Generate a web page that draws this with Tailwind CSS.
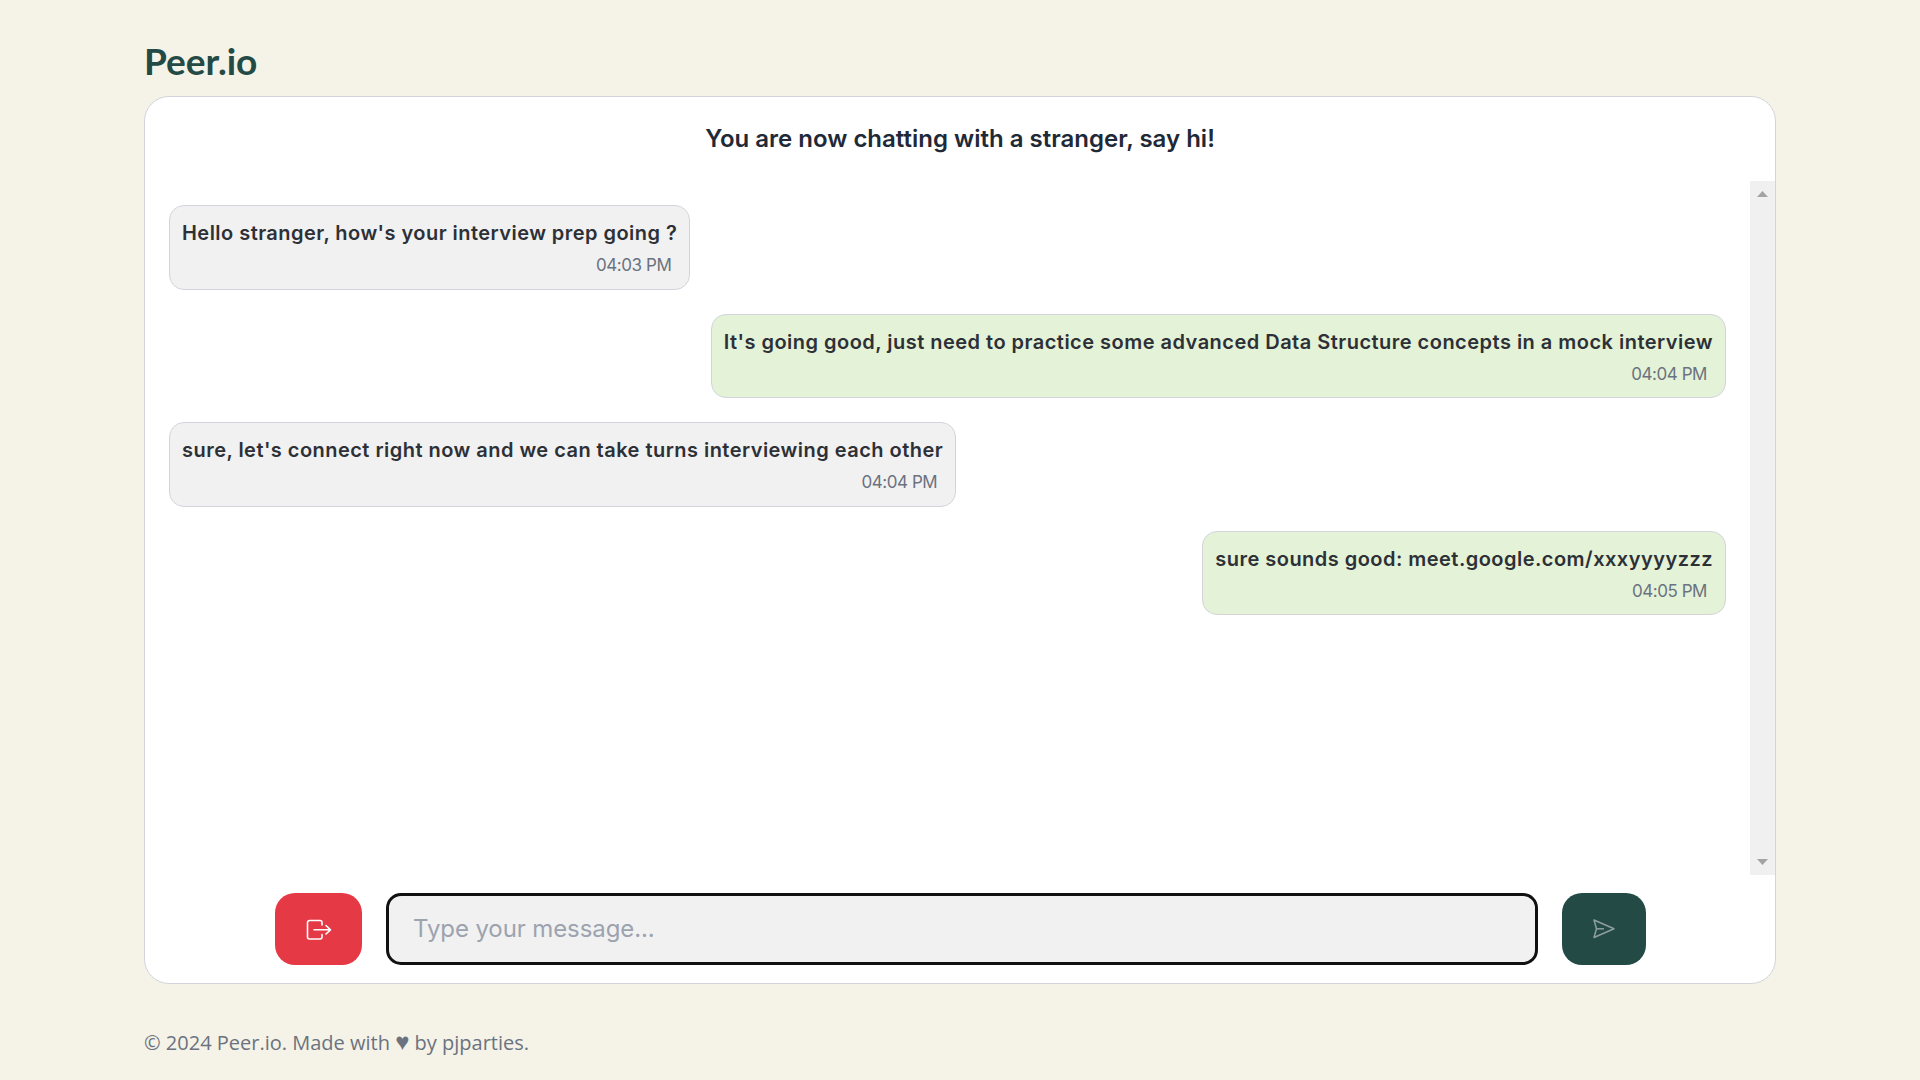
<!DOCTYPE html>
<html lang="en">
<head>
    <meta charset="UTF-8">
    <meta name="viewport" content="width=device-width, initial-scale=1.0">
    <title>Peer.io</title>
    <script src="https://cdn.jsdelivr.net/npm/@tailwindcss/browser@4"></script>
</head>
<body class="bg-[#f5f2e7] h-[1080px] overflow-hidden font-['Inter',sans-serif]">

<div class="w-[1632px] ml-[144px]">
    <!-- Logo -->
    <h1 class="h-[96px] pt-[37px] text-[37px] leading-[48px] font-bold text-[#234a45] font-['Lato',sans-serif]">Peer.io</h1>

    <!-- Chat card -->
    <div class="h-[888px] bg-white border border-[#d1d5db] rounded-[25px] flex flex-col">
        <h2 class="h-[84px] pt-[25px] text-center text-[24px] leading-[34px] font-[560] text-[#1f2937]">You are now chatting with a stranger, say hi!</h2>

        <div class="h-[694px] flex">
            <div class="flex-1 pt-[24px] px-[24px] flex flex-col gap-[24px] text-[#2d3036]">
                <div class="self-start h-[84.500px] bg-[#f1f1f1] border border-[#d1d5db] rounded-[15px] px-[12px] pt-[11px]">
                    <p class="text-[20px] leading-[32px] font-[575] tracking-[0.46px]">Hello stranger, how's your interview prep going ?</p>
                    <p class="text-[17px] leading-[30px] mt-[1px] text-right pr-[6px] text-[#6b7280] tracking-[-0.45px]">04:03 PM</p>
                </div>
                <div class="self-end h-[84.500px] bg-[#e4f2d7] border border-[#d1d5db] rounded-[15px] px-[12px] pt-[11px]">
                    <p class="text-[20px] leading-[32px] font-[575] tracking-[0.48px]">It's going good, just need to practice some advanced Data Structure concepts in a mock interview</p>
                    <p class="text-[17px] leading-[30px] mt-[1px] text-right pr-[6px] text-[#6b7280] tracking-[-0.45px]">04:04 PM</p>
                </div>
                <div class="self-start h-[84.500px] bg-[#f1f1f1] border border-[#d1d5db] rounded-[15px] px-[12px] pt-[11px]">
                    <p class="text-[20px] leading-[32px] font-[575] tracking-[0.47px]">sure, let's connect right now and we can take turns interviewing each other</p>
                    <p class="text-[17px] leading-[30px] mt-[1px] text-right pr-[6px] text-[#6b7280] tracking-[-0.45px]">04:04 PM</p>
                </div>
                <div class="self-end h-[84.500px] bg-[#e4f2d7] border border-[#d1d5db] rounded-[15px] px-[12px] pt-[11px]">
                    <p class="text-[20px] leading-[32px] font-[575] tracking-[0.47px]">sure sounds good: meet.google.com/xxxyyyyzzz</p>
                    <p class="text-[17px] leading-[30px] mt-[1px] text-right pr-[6px] text-[#6b7280] tracking-[-0.45px]">04:05 PM</p>
                </div>
            </div>
            <!-- Scrollbar -->
            <div class="w-[25px] bg-[#f0f0f0] flex flex-col items-center justify-between py-[10px]">
                <svg width="11" height="6" viewBox="0 0 11 6"><path d="M5.500 0L11 6H0z" fill="#a3a3a3"/></svg>
                <svg width="11" height="6" viewBox="0 0 11 6"><path d="M0 0H11L5.500 6z" fill="#a3a3a3"/></svg>
            </div>
        </div>

        <!-- Input row -->
        <div class="flex justify-center gap-[24px] pt-[18px] pl-[1px]">
            <button class="w-[87px] h-[72px] bg-[#e63946] rounded-[20px] flex items-center justify-center">
                <svg class="mt-[2px]" width="26" height="22" viewBox="0 0 26 22" fill="none" stroke="white" stroke-width="1.600" stroke-linecap="round" stroke-linejoin="round"><path d="M16 6V3.500A2 2 0 0 0 14 1.500H3.500A2 2 0 0 0 1.500 3.500V18A2 2 0 0 0 3.500 20H14A2 2 0 0 0 16 18V15.500"/><path d="M8 10.800H24.500M20 6.500L24.500 10.800L20 15"/></svg>
            </button>
            <div class="w-[1152px] h-[72px] bg-[#f1f1f1] border-[3px] border-[#111111] rounded-[15px] pl-[24px] flex items-center text-[24px] text-[#9ca3af] tracking-[-0.1px]">Type your message...</div>
            <button class="w-[84px] h-[72px] bg-[#234a45] rounded-[20px] flex items-center justify-center">
                <svg width="22" height="20" viewBox="0 0 22 20" fill="none" stroke="#8f9ea0" stroke-width="1.500" stroke-linejoin="round"><path d="M1 1L21 9.800L1 18.500L3.500 9.800Z"/><path d="M3.500 9.800H11"/></svg>
            </button>
        </div>
    </div>

    <!-- Footer -->
    <p class="pt-[45px] h-[28px] text-[20px] leading-[28px] text-[#6b7280] font-['Open_Sans',sans-serif] whitespace-nowrap">© 2024 Peer.io. Made with <span class="text-[24px] leading-[20px]">♥</span> by pjparties.</p>
</div>

</body>
</html>
